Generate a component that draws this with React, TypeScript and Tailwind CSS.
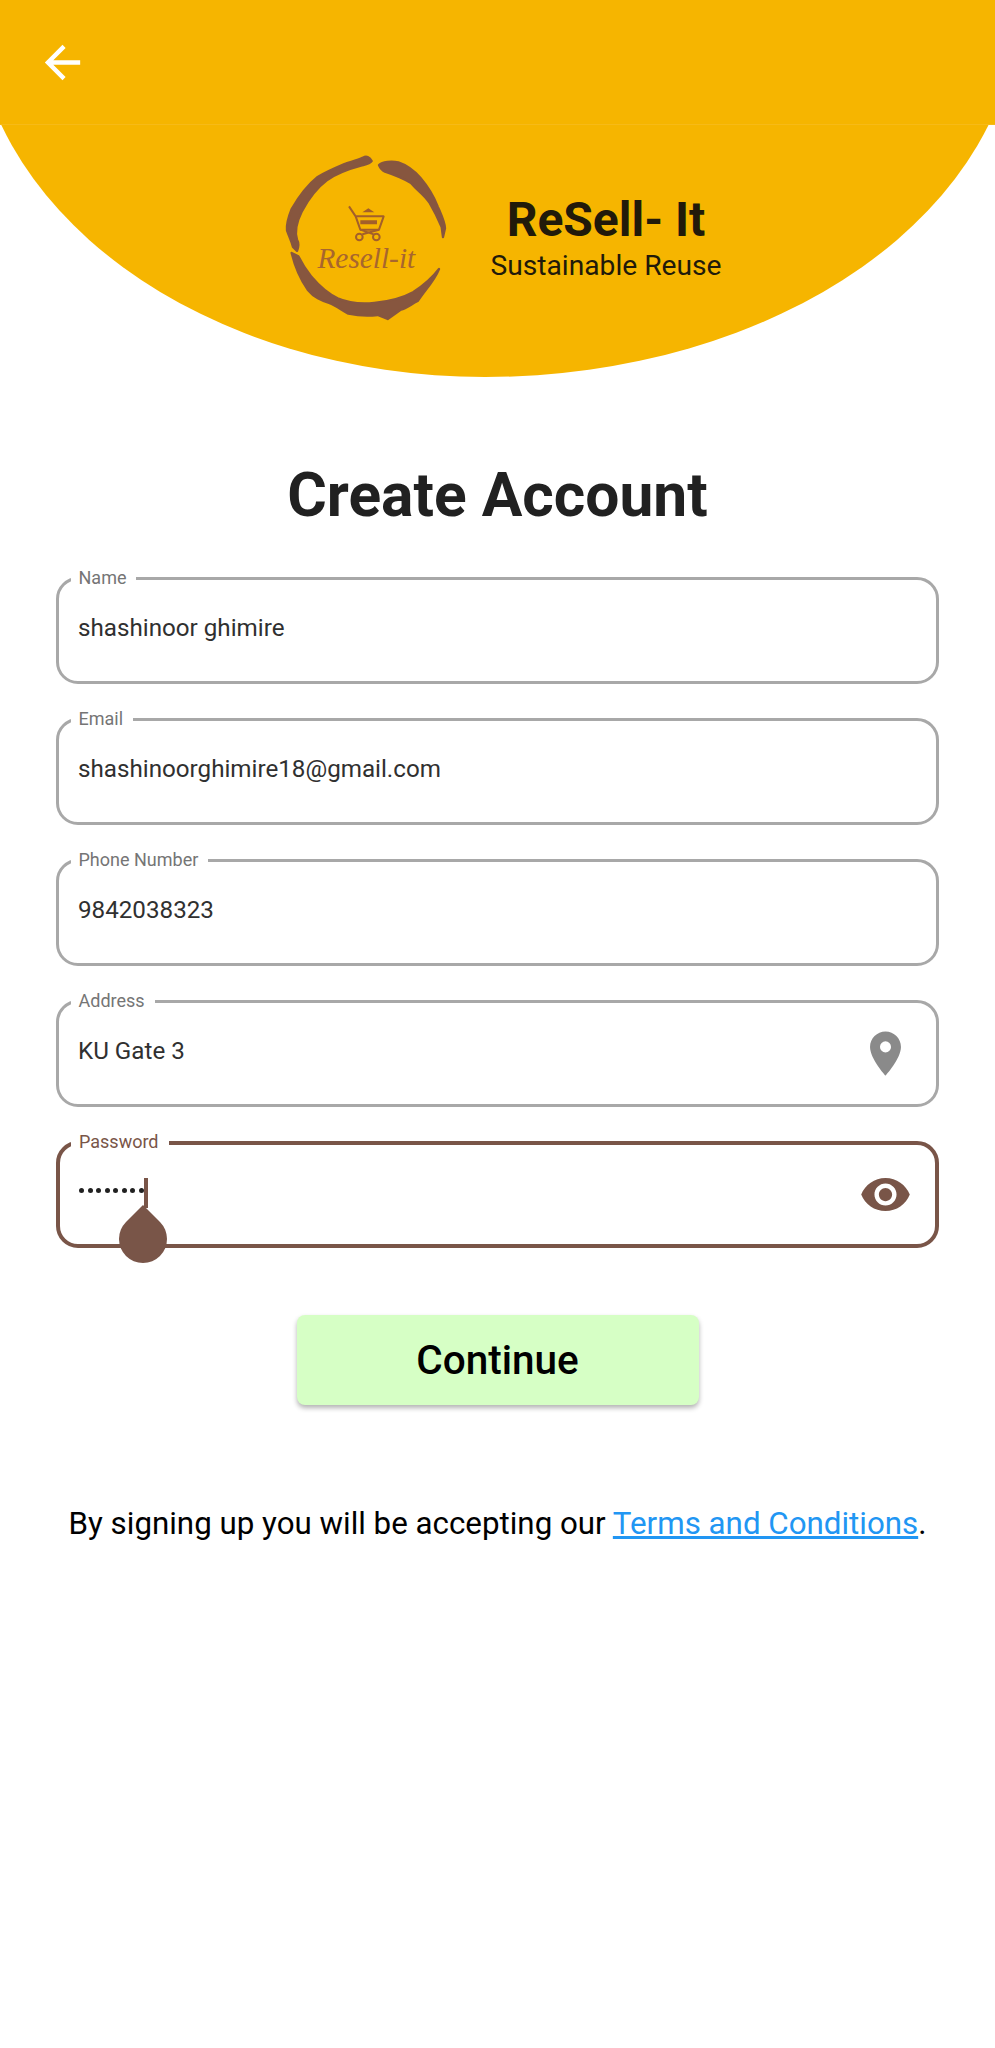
import React from "react";
import { MdArrowBack, MdLocationOn, MdVisibility } from "react-icons/md";

const FIELDS = [
  { label: "Name", value: "shashinoor ghimire" },
  { label: "Email", value: "shashinoorghimire18@gmail.com" },
  { label: "Phone Number", value: "9842038323" },
  { label: "Address", value: "KU Gate 3", icon: "pin" },
];

const Logo = () => (
  <svg viewBox="0 0 600 600" className="w-[200px] h-[200px] shrink-0">
    <g fill="#87563f" stroke="#87563f" strokeWidth="7" strokeLinejoin="round">
      <path d="M332 60 C326 48 316 44 306 50 C290 58 270 62 258 66 C230 78 196 92 170 108 C140 132 112 170 92 204 C84 224 76 250 78 268 C84 286 92 300 96 318 L108 330 C112 320 116 310 108 296 C100 270 106 244 122 212 C140 178 168 140 200 116 C230 96 270 82 300 74 C314 70 326 68 332 60 Z" />
      <path d="M354 72 C364 62 392 60 412 64 C436 72 460 90 478 110 C500 136 520 170 530 196 C540 220 552 244 552 262 L546 288 L542 258 C530 230 520 210 506 186 C490 160 470 150 450 126 C420 108 390 98 372 92 C364 88 358 82 354 72 Z" />
      <path d="M92 336 L112 346 C122 366 132 384 150 406 C172 432 200 458 230 472 C262 486 300 490 340 486 C380 482 420 474 456 454 C490 432 516 408 534 384 C524 410 506 432 486 458 L470 480 C450 490 436 502 420 506 L380 534 L350 522 C320 526 290 524 262 518 C240 506 226 494 204 486 C180 478 160 470 140 446 C122 420 104 386 92 336 Z" />
    </g>
    <g fill="none" stroke="#a35f2a" strokeWidth="6" strokeLinejoin="round">
      <path d="M264 196 L284 226 L298 266 L354 266 L368 226 L284 226" />
      <circle cx="295" cy="288" r="10" />
      <circle cx="346" cy="288" r="10" />
      <path d="M298 266 L338 280 M354 266 L304 280" />
    </g>
    <path d="M304 214 L322 202 L340 214 Z M298 238 H348 V250 H298 Z" fill="#a35f2a" />
    <text
      x="316"
      y="380"
      textAnchor="middle"
      fill="#a8662e"
      fontSize="88"
      fontStyle="italic"
      fontFamily="'Liberation Serif', serif"
    >
      Resell-it
    </text>
  </svg>
);

const Field = ({ label, value, icon }: { label: string; value: string; icon?: string }) => (
  <div className="relative h-[107px] rounded-[22px] border-[3px] border-[#a8a8a8] flex items-center pl-[19px] pr-[24.5px] pb-[4px]">
    <span className="absolute -top-[14px] left-[11.5px] bg-white pl-[8px] pr-[10px] text-[18px] leading-[24px] text-[#757575]">
      {label}
    </span>
    <span className="flex-1 text-[24.2px] text-[#303030]">{value}</span>
    {icon === "pin" && <MdLocationOn size={53} color="#8a8a8a" className="mt-[4px]" />}
  </div>
);

export default function App() {
  return (
    <div className="min-h-screen bg-white font-['Roboto',sans-serif]">
      <div className="h-[125px] flex items-center pl-[36px] bg-[#f6b500] border-b border-[#f7ba17]">
        <MdArrowBack size={53} color="#ffffff" />
      </div>

      <div className="relative h-[252px] overflow-hidden">
        {/* big oval behind the logo, only its lower part shows */}
        <div className="absolute -top-[498px] -left-[27px] w-[1045px] h-[750px] rounded-[512px_533px_533px_512px/375px] bg-[#f6b500]" />
        <div className="relative flex items-start justify-center pr-[12.5px] pt-[16px]">
          <Logo />
          <div className="ml-[29.5px] mt-[51px] flex flex-col items-center text-[#211a0a]">
            <span className="text-[48px] leading-[56px] font-bold">ReSell- It</span>
            <span className="text-[28.2px] leading-[35px]">Sustainable Reuse</span>
          </div>
        </div>
      </div>

      <div className="px-[56px] pt-[80px]">
        <h1 className="text-center text-[60.5px] leading-[78px] font-bold text-[#212121] mb-[42px]">
          Create Account
        </h1>

        <div className="flex flex-col gap-[34px]">
          {FIELDS.map((f) => (
            <Field key={f.label} label={f.label} value={f.value} icon={f.icon} />
          ))}

          <div className="relative h-[107px] rounded-[22px] border-[4px] border-[#795548] flex items-center pl-[19px] pr-[23px] pb-[8px]">
            <span className="absolute -top-[15px] left-[11px] bg-white pl-[8px] pr-[10px] text-[18px] leading-[24px] text-[#795548]">
              Password
            </span>
            <span className="flex-1 flex items-center gap-[3.5px]">
              {[0, 1, 2, 3, 4, 5, 6, 7].map((d) => (
                <span key={d} className="w-[5px] h-[5px] rounded-full bg-[#212121]" />
              ))}
              <span className="w-[4px] h-[30px] -ml-[3.5px] mt-[4px] bg-[#795548]" />
            </span>
            <MdVisibility size={53} color="#795548" className="mt-[7px]" />
            {/* text selection handle */}
            <div className="absolute left-[59px] top-[70px] w-[48px] h-[48px] bg-[#795548] rounded-[50%_0_50%_50%] -rotate-45" />
          </div>
        </div>

        <div className="flex justify-center mt-[67px]">
          <button className="w-[402px] h-[90px] rounded-[8px] bg-[#d6ffc5] text-[40.5px] font-medium text-black shadow-[0_3px_5px_rgba(0,0,0,0.3)]">
            Continue
          </button>
        </div>

        <p className="-mx-[20px] mt-[100px] text-center text-[31.3px] leading-[38px] text-black whitespace-nowrap">
          By signing up you will be accepting our{" "}
          <span className="text-[#2196f3] underline">Terms and Conditions</span>.
        </p>
      </div>
    </div>
  );
}
